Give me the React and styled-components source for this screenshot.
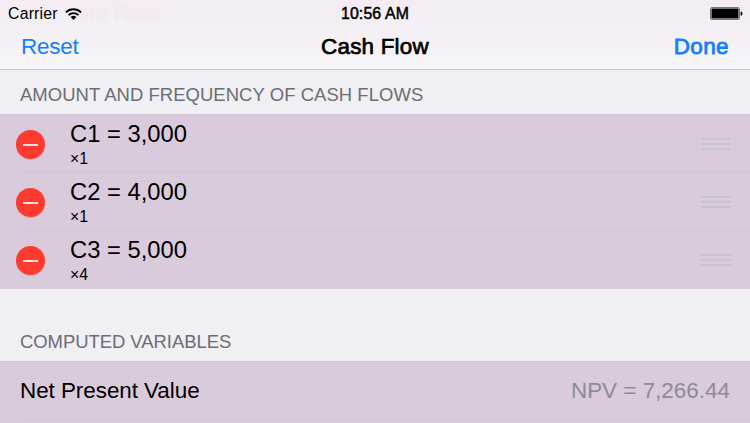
import React from 'react';
import styled, { createGlobalStyle } from 'styled-components'

const cashFlows = [
    { id: 'C1', amount: '3,000', frequency: 1 },
    { id: 'C2', amount: '4,000', frequency: 1 },
    { id: 'C3', amount: '5,000', frequency: 4 },
]

function App() {
    return (
        <Screen>
            <GlobalStyle />
            <Header>
                <Ghost>unt Rate</Ghost>
                <StatusBar>
                    <Carrier>
                        Carrier
                        <WifiIcon />
                    </Carrier>
                    <Clock>10:56 AM</Clock>
                    <BatteryIcon />
                </StatusBar>
                <NavBar>
                    <NavButton>Reset</NavButton>
                    <Title>Cash Flow</Title>
                    <NavButton $strong>Done</NavButton>
                </NavBar>
            </Header>
            <SectionTitle $height={44} $spacing='0.05px'>AMOUNT AND FREQUENCY OF CASH FLOWS</SectionTitle>
            <Table>
                {cashFlows.map(flow => (
                    <FlowRow key={flow.id}>
                        <DeleteButton aria-label={`Delete ${flow.id}`}><Minus /></DeleteButton>
                        <FlowBody>
                            <Amount>{flow.id} = {flow.amount}</Amount>
                            <Frequency>×{flow.frequency}</Frequency>
                        </FlowBody>
                        <Grip><GripLine /><GripLine /><GripLine /></Grip>
                    </FlowRow>
                ))}
            </Table>
            <SectionTitle $height={72} $spacing='-0.05px'>COMPUTED VARIABLES</SectionTitle>
            <Table>
                <ResultRow>
                    <ResultLabel>Net Present Value</ResultLabel>
                    <ResultValue>NPV = 7,266.44</ResultValue>
                </ResultRow>
                <ResultRow />
            </Table>
        </Screen>
    )
}

const WifiIcon = () => (
    <svg width="17" height="12" viewBox="0 0 17 12">
        <path d="M0.9 4.4A10.8 10.8 0 0 1 16.1 4.4" fill="none" stroke="#000" strokeWidth="2" />
        <path d="M3.6 7.1A7 7 0 0 1 13.4 7.1" fill="none" stroke="#000" strokeWidth="1.9" />
        <path d="M5.6 9.1A4.1 4.1 0 0 1 11.4 9.1L8.5 12Z" fill="#000" />
    </svg>
)

const BatteryIcon = () => (
    <svg width="33" height="13" viewBox="0 0 33 13">
        <rect x="0.5" y="0.5" width="29" height="12" rx="1.5" fill="none" stroke="#77757a" />
        <rect x="1.5" y="1.5" width="27" height="10" rx="0.5" fill="#000" />
        <path d="M31 4.8A2 2 0 0 1 31 8.4Z" fill="#000" stroke="#000" strokeWidth="0.8" />
    </svg>
)

const GlobalStyle = createGlobalStyle`
    * {
        box-sizing: border-box;
    }
    body {
        margin: 0;
        overflow: hidden;
        font-family: 'Liberation Sans', Arial, sans-serif;
    }
`

const Screen = styled.div`
    width: 750px;
    height: 423px;
    overflow: hidden;
    background: #efeff4;
    color: #000;
`

const Header = styled.header`
    position: relative;
    height: 70px;
    background: linear-gradient(#f3edf3, #f4f0f4 55%, #f6f6f8);
    border-bottom: 1px solid #c1bfc4;
`

/* row scrolled under the translucent bar */
const Ghost = styled.span`
    position: absolute;
    top: 0;
    left: 77px;
    font-size: 22.4px;
    line-height: 27px;
    color: #eee8ee;
    filter: blur(1px);
`

const StatusBar = styled.div`
    position: relative;
    display: grid;
    grid-template-columns: 1fr auto 1fr;
    align-items: center;
    height: 27px;
    padding: 0 7px 0 8px;
    font-size: 15.84px;
    line-height: 27px;

    > :last-child {
        justify-self: end;
    }
`

const Carrier = styled.div`
    display: flex;
    align-items: center;
    gap: 7px;
    letter-spacing: 0.2px;
`

const Clock = styled.span`
    margin-right: 1px;
    letter-spacing: 0.15px;
    -webkit-text-stroke: 0.5px #000;
`

const NavBar = styled.nav`
    display: grid;
    grid-template-columns: 1fr auto 1fr;
    align-items: start;
    height: 42px;
    padding: 0 21px;
    font-size: 22.44px;
    line-height: 39px;
`

const NavButton = styled.button`
    padding: 0;
    border: none;
    background: none;
    font: inherit;
    color: #157efb;
    cursor: pointer;
    justify-self: ${p => p.$strong ? 'end' : 'start'};
    letter-spacing: ${p => p.$strong ? '0.4px' : '-0.2px'};
    -webkit-text-stroke: ${p => p.$strong ? '0.8px #157efb' : '0'};
`

const Title = styled.h1`
    margin: 0;
    font: inherit;
    letter-spacing: 0.2px;
    -webkit-text-stroke: 0.7px #000;
`

const SectionTitle = styled.h2`
    display: flex;
    align-items: flex-end;
    height: ${p => p.$height}px;
    margin: 0;
    padding: 0 20px 8px;
    font-size: 18.48px;
    font-weight: 400;
    line-height: 22px;
    letter-spacing: ${p => p.$spacing};
    color: #6d6d72;
`

const Table = styled.div`
    background: #d9cbdc;
`

const FlowRow = styled.div`
    display: flex;
    align-items: center;
    height: 58px;
    padding: 0 19px 0 16px;
    background: linear-gradient(#d2c6d5, #d2c6d5) 20px 0 / 100% 1px no-repeat;

    &:first-child {
        background-position: 0 0;
    }
    &:last-child {
        height: 59px;
        padding-bottom: 1px;
    }
`

const DeleteButton = styled.button`
    display: grid;
    place-items: center;
    width: 29px;
    height: 29px;
    margin-top: 3px;
    padding: 0;
    border: none;
    border-radius: 50%;
    background: #ff3b30;
    box-shadow: 0 1px 1px rgba(120, 90, 120, 0.25);
`

const Minus = styled.span`
    width: 15px;
    height: 2px;
    background: #ffe3e4;
`

const FlowBody = styled.div`
    flex: 1;
    margin-left: 25px;
    padding-top: 3px;
`

const Amount = styled.div`
    font-size: 23.77px;
    line-height: 28px;
`

const Frequency = styled.div`
    font-size: 15.84px;
    line-height: 21px;
`

const Grip = styled.div`
    display: grid;
    gap: 3px;
    width: 30px;
    margin-top: 2px;
`

const GripLine = styled.span`
    height: 2px;
    background: #c9c2cf;
`

const ResultRow = styled.div`
    display: flex;
    justify-content: space-between;
    height: 58px;
    padding: 0 20px;
    font-size: 22.44px;
    line-height: 59px;
    background: linear-gradient(#d2c6d5, #d2c6d5) 20px 0 / 100% 1px no-repeat;

    &:first-child {
        background-position: 0 0;
    }
`

const ResultLabel = styled.span`
    letter-spacing: -0.05px;
`

const ResultValue = styled.span`
    color: #8e8a95;
`

export default App;
